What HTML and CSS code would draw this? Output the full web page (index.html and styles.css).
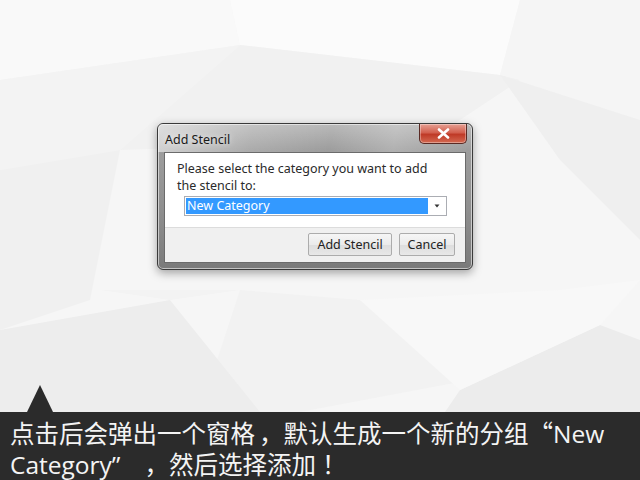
FILE: index.html
```html
<!DOCTYPE html>
<html lang="zh-CN">
<head>
<meta charset="utf-8">
<title>Add Stencil</title>
<link rel="stylesheet" href="styles.css">
</head>
<body>
<div class="page">
  <svg class="bg" width="640" height="480" viewBox="0 0 640 480" aria-hidden="true">
    <rect width="640" height="480" fill="#f6f6f6"/>
    <polygon points="0,0 230,0 240,45 0,80" fill="#f9f9f9"/>
    <polygon points="230,0 520,0 500,75 240,45" fill="#fbfbfb"/>
    <polygon points="520,0 640,0 640,120 500,75" fill="#f5f5f5"/>
    <polygon points="240,45 500,75 520,80 430,140 120,150" fill="#f1f1f1"/>
    <polygon points="0,80 240,45 120,150 0,170" fill="#f3f3f3"/>
    <polygon points="500,75 640,120 640,240 560,160" fill="#efefef"/>
    <polygon points="0,170 120,150 90,300 0,330" fill="#f0f0f0"/>
    <polygon points="240,290 360,300 470,380 300,412 200,412" fill="#f2f2f2"/>
    <polygon points="0,330 170,300 260,412 0,412" fill="#ededed"/>
    <polygon points="460,390 600,325 640,340 640,412 445,412" fill="#ececec"/>
    <polygon points="360,300 560,290 640,280 600,325 460,390" fill="#f8f8f8"/>
    <polygon points="100,290 240,290 170,300" fill="#f3f3f3"/>
  </svg>
  <main class="stage">
    <section class="dialog">
      <header class="titlebar">
        <span class="title">Add Stencil</span>
        <button class="close" type="button" aria-label="Close">
          <svg width="13" height="11" viewBox="0 0 13 11"><path d="M2 1.5 L11 9.5 M11 1.5 L2 9.5" stroke="#fff" stroke-width="2.6" stroke-linecap="round"/></svg>
        </button>
      </header>
      <div class="client">
        <div class="body">
          <p class="prompt">Please select the category you want to add<br>the stencil to:</p>
          <div class="combo">
            <span class="selected">New Category</span>
            <span class="arrow">
              <svg width="6" height="4" viewBox="0 0 6 4"><path d="M0.5 0.5 L5.5 0.5 L3 3.5 Z" fill="#333"/></svg>
            </span>
          </div>
        </div>
        <div class="footer">
          <button class="btn" type="button">Add Stencil</button>
          <button class="btn" type="button">Cancel</button>
        </div>
      </div>
    </section>
  </main>
  <footer class="caption">
    <p class="caption-text">点击后会弹出一个窗格<span class="cjk comma">，</span>默认生成一个新的分组<span class="cjk">“</span>New Category”<span class="cjk comma wide">，</span>然后选择添加<span class="cjk bang">！</span></p>
  </footer>
</div>
</body>
</html>
```
FILE: styles.css
```css
* { box-sizing: border-box; }
html, body { margin: 0; padding: 0; }
body {
  width: 640px;
  height: 480px;
  overflow: hidden;
  font-family: "Noto Sans", "Open Sans", sans-serif;
}
.page {
  position: relative;
  width: 640px;
  height: 480px;
  display: flex;
  flex-direction: column;
}
.bg {
  position: absolute;
  left: 0;
  top: 0;
  z-index: 0;
}
.stage {
  position: relative;
  z-index: 1;
  height: 412px;
  padding: 123px 0 0 157px;
}
.dialog {
  width: 316px;
  height: 147px;
  border: 1px solid #3a3a3a;
  border-radius: 6px;
  background: linear-gradient(180deg, #b9b9b9 0%, #9d9d9d 18%, #8f8f8f 60%, #7a7a7a 100%);
  box-shadow: 0 0 0 1px rgba(255,255,255,0.55) inset, 0 3px 10px rgba(0,0,0,0.35);
  display: flex;
  flex-direction: column;
  padding: 0 6px 6px 6px;
}
.titlebar {
  height: 28px;
  display: flex;
  align-items: flex-start;
  justify-content: space-between;
  background: linear-gradient(100deg, rgba(255,255,255,0.55) 0%, rgba(255,255,255,0.15) 30%, rgba(255,255,255,0) 55%, rgba(255,255,255,0.2) 75%, rgba(255,255,255,0) 100%);
  margin: 0 -6px;
  padding: 0 6px 0 7px;
  border-radius: 5px 5px 0 0;
}
.title {
  font-size: 12.5px;
  color: #1a1a1a;
  line-height: 1;
  padding-top: 10px;
  text-shadow: 0 0 6px rgba(255,255,255,0.9);
}
.close {
  width: 48px;
  height: 20px;
  margin-top: 0;
  margin-right: -1px;
  border: 1px solid #5a2a24;
  border-top: none;
  border-radius: 0 0 5px 5px;
  background: linear-gradient(180deg, #e7a094 0%, #d2604f 45%, #bf3a27 55%, #d46a52 100%);
  box-shadow: 0 0 0 1px rgba(255,255,255,0.35) inset;
  display: flex;
  align-items: center;
  justify-content: center;
  padding: 0;
}
.client {
  flex: 1;
  display: flex;
  flex-direction: column;
  border: 1px solid #6b6b6b;
  background: #fff;
}
.body {
  flex: 1;
  padding: 7px 0 0 12px;
}
.prompt {
  margin: 0;
  font-size: 12.5px;
  line-height: 17px;
  color: #2a2a2a;
}
.combo {
  margin: 2px 18px 0 7px;
  height: 20px;
  border: 1px solid #abadb3;
  display: flex;
  align-items: stretch;
  padding: 1px;
  background: #fff;
}
.selected {
  flex: 1;
  background: #3399ff;
  color: #fff;
  font-size: 12.5px;
  line-height: 16px;
  padding-left: 1px;
}
.arrow {
  width: 17px;
  display: flex;
  align-items: center;
  justify-content: center;
}
.footer {
  height: 35px;
  border-top: 1px solid #dcdcdc;
  background: #f0f0f0;
  display: flex;
  justify-content: flex-end;
  align-items: flex-start;
  gap: 7px;
  padding: 5px 10px 0 0;
}
.btn {
  height: 23px;
  border: 1px solid #acacac;
  border-radius: 2px;
  background: linear-gradient(180deg, #f6f6f6 0%, #ebebeb 50%, #dddddd 51%, #e8e8e8 100%);
  font-family: "Noto Sans", "Open Sans", sans-serif;
  font-size: 12.5px;
  color: #222;
  padding: 0 6px;
}
.btn:first-child { width: 84px; }
.btn:last-child { width: 56px; }
.caption {
  position: relative;
  z-index: 1;
  flex: 1;
  background: #2b2b2b;
  padding: 6px 10px 0 10px;
}
.caption::before {
  content: "";
  position: absolute;
  left: 27px;
  top: -27px;
  border-left: 13px solid transparent;
  border-right: 13px solid transparent;
  border-bottom: 27px solid #2b2b2b;
}
.caption-text {
  margin: 0;
  color: #f4f4f4;
  font-family: "Open Sans", "Noto Sans CJK SC", sans-serif;
  font-size: 24.5px;
  line-height: 30px;
  letter-spacing: 0;
}
.caption-text .cjk {
  font-family: "Noto Sans CJK SC", sans-serif;
}
.caption-text .comma {
  padding-left: 4px;
}
.caption-text .comma.wide {
  padding-left: 24px;
}
.caption-text .bang {
  padding-left: 6px;
}
```
